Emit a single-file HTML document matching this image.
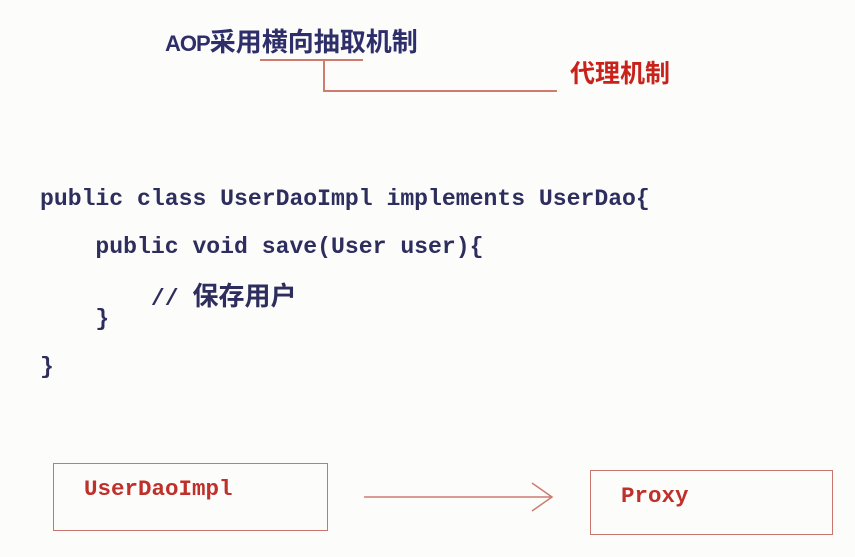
<!DOCTYPE html>
<html><head><meta charset="utf-8"><style>
body{margin:0;width:855px;height:557px;background:#fcfcfb;position:relative;overflow:hidden}
.t{position:absolute;white-space:pre;line-height:1}
.c{font-family:"Liberation Mono","Noto Sans CJK SC",monospace;font-size:23.1px;color:#2e2e5e;font-weight:bold;letter-spacing:0}
.l{position:absolute;background:#cf7b70}
.box{position:absolute;border:1.5px solid #c9776e}
</style></head><body>
<div class="t" style="left:165px;top:29px;font-family:'Liberation Sans','Noto Sans CJK SC',sans-serif;font-size:22px;font-weight:bold;color:#2e2e6a"><span style="letter-spacing:-1px">AOP</span><span style="font-size:26px;letter-spacing:0">采用横向抽取机制</span></div>
<div class="l" style="left:260px;top:59px;width:103px;height:2px"></div>
<div class="l" style="left:323px;top:59px;width:2px;height:33px"></div>
<div class="l" style="left:323px;top:90px;width:234px;height:2px"></div>
<div class="t" style="left:570px;top:60px;font-family:'Noto Sans CJK SC',sans-serif;font-size:25px;font-weight:bold;color:#c8221a">代理机制</div>
<div class="t c" style="left:40px;top:188px">public class UserDaoImpl implements UserDao{</div>
<div class="t c" style="left:40px;top:236px">    public void save(User user){</div>
<div class="t c" style="left:40px;top:285px">        // <span style="font-size:26px">保存用户</span></div>
<div class="t c" style="left:40px;top:308px">    }</div>
<div class="t c" style="left:40px;top:356px">}</div>
<div class="box" style="left:53px;top:463px;width:273px;height:66px"></div>
<div class="t" style="left:84px;top:478px;font-family:'Liberation Mono',monospace;font-size:22.5px;font-weight:bold;color:#c0302a">UserDaoImpl</div>
<svg style="position:absolute;left:360px;top:480px" width="200" height="36"><path d="M4 17H192M172 3L192 17L172 31" fill="none" stroke="#cf7b70" stroke-width="1.5"/></svg>
<div class="box" style="left:590px;top:470px;width:241px;height:63px"></div>
<div class="t" style="left:621px;top:485px;font-family:'Liberation Mono',monospace;font-size:22.5px;font-weight:bold;color:#c0302a">Proxy</div>
</body></html>
